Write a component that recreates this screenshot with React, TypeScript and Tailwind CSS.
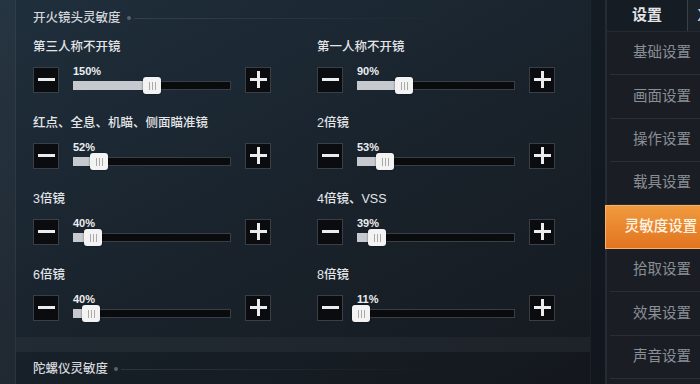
import React from 'react';

type Sens = { label: string; value: number; pos: number };

// pos = thumb centre, px from the track's left edge
const FIRE_SCOPE: Sens[] = [
  { label: '第三人称不开镜', value: 150, pos: 79 },
  { label: '第一人称不开镜', value: 90, pos: 47 },
  { label: '红点、全息、机瞄、侧面瞄准镜', value: 52, pos: 26 },
  { label: '2倍镜', value: 53, pos: 28 },
  { label: '3倍镜', value: 40, pos: 20 },
  { label: '4倍镜、VSS', value: 39, pos: 20 },
  { label: '6倍镜', value: 40, pos: 18 },
  { label: '8倍镜', value: 11, pos: 4 },
];

const GYRO: Sens[] = [
  { label: '第三人称不开镜', value: 300, pos: 150 },
  { label: '第一人称不开镜', value: 300, pos: 150 },
];

const MENU = ['基础设置', '画面设置', '操作设置', '载具设置', '灵敏度设置', '拾取设置', '效果设置', '声音设置', '其他设置'];
const ACTIVE_MENU = '灵敏度设置';

const StepButton = ({ kind }: { kind: 'minus' | 'plus' }) => (
  <button className="flex h-[26px] w-[26px] shrink-0 items-center justify-center border border-[#3a3f46] bg-[#0a0c0f]">
    <svg width="17" height="17" viewBox="0 0 17 17" fill="#ececec">
      <rect x="0" y="7" width="17" height="3" />
      {kind === 'plus' && <rect x="7" y="0" width="3" height="17" />}
    </svg>
  </button>
);

const SensRow = ({ label, value, pos }: Sens) => (
  <div className="flex flex-col">
    <div className="h-4 whitespace-nowrap text-[12.5px] font-medium leading-4 text-[#e3e5e8]">{label}</div>
    <div className="mt-[10px] flex items-center justify-between">
      <StepButton kind="minus" />
      <div className="flex w-[158px] flex-col">
        <span className="h-3 text-[11px] font-bold leading-3 text-[#eceef0]">{value}%</span>
        <div className="relative h-[17px]">
          <div className="absolute inset-x-0 top-[4px] h-[9px] border border-[#3a3f45] bg-[#090b0d]" />
          <div className="absolute left-0 top-[4px] h-[9px] bg-[#c6c9cd]" style={{ width: pos }} />
          <div
            className="absolute top-0 flex h-[17px] w-[18px] items-center justify-center gap-[2px] rounded-[3px] bg-[#f3f3f3] shadow-[0_0_2px_rgba(0,0,0,0.6)]"
            style={{ left: pos - 9 }}
          >
            <span className="h-[8px] w-px bg-[#a9a9a9]" />
            <span className="h-[8px] w-px bg-[#a9a9a9]" />
            <span className="h-[8px] w-px bg-[#a9a9a9]" />
          </div>
        </div>
      </div>
      <StepButton kind="plus" />
    </div>
  </div>
);

const SectionTitle = ({ title }: { title: string }) => (
  <div className="flex h-4 items-center">
    <span className="text-[12.5px] font-medium leading-4 text-[#d3d6da]">{title}</span>
    <span className="ml-[6px] h-[4px] w-[4px] rounded-full bg-[#5b6169]" />
    <span className="ml-[3px] h-px w-[320px] bg-linear-to-r from-white/10 to-transparent" />
  </div>
);

export default function App() {
  return (
    <div
      className="relative h-[384px] w-[700px] overflow-hidden bg-linear-to-br from-[#1f2f3c] via-[#19222b] to-[#15181d] select-none"
      style={{ fontFamily: '"Liberation Sans", "Noto Sans CJK SC", sans-serif' }}
    >
      <div className="flex h-full w-[717px]">
        {/* left edge strip */}
        <div className="w-4 shrink-0 border-r border-white/5 bg-white/[0.03]" />

        {/* sensitivity list */}
        <main className="flex w-[574px] shrink-0 flex-col overflow-hidden">
          <section className="shrink-0 pb-[15px] pl-[17px] pt-[10px]">
            <SectionTitle title="开火镜头灵敏度" />
            <div className="mt-[13px] grid grid-cols-[238px_238px] gap-x-[46px] gap-y-[21px]">
              {FIRE_SCOPE.map(s => (
                <SensRow key={s.label + s.value} {...s} />
              ))}
            </div>
          </section>

          <div className="h-[15px] shrink-0 bg-white/[0.035]" />

          <section className="shrink-0 bg-black/[0.06] pl-[17px] pt-[9px]">
            <SectionTitle title="陀螺仪灵敏度" />
            <div className="mt-[13px] grid grid-cols-[238px_238px] gap-x-[46px] gap-y-[21px]">
              {GYRO.map(s => (
                <SensRow key={s.label} {...s} />
              ))}
            </div>
          </section>
        </main>

        {/* gutter */}
        <div className="w-[15px] shrink-0 border-l border-white/[0.04] bg-[#0e141a]/50" />

        {/* settings sidebar */}
        <aside className="flex w-[112px] shrink-0 flex-col border-l-2 border-[#262c34] bg-[#1a1e24]">
          <div className="flex h-[32px] shrink-0 border-b border-[#252a31] bg-[#161c23]">
            <div className="flex w-[80px] items-center justify-center text-[15px] font-bold text-[#e2e4e6]">设置</div>
            <div className="flex w-[30px] items-center justify-center border-l border-[#3a4048] bg-[#1b2129] text-[16px] text-[#d6d8da]">
              X
            </div>
          </div>
          {MENU.map(item =>
            item === ACTIVE_MENU ? (
              <div
                key={item}
                className="-ml-[2px] flex h-[44px] shrink-0 items-center justify-center border border-[#f6b26a] bg-linear-to-b from-[#f09a3e] to-[#e2741f] text-[14.5px] font-medium text-[#fff3e4]"
              >
                {item}
              </div>
            ) : (
              <div
                key={item}
                className="ml-[3px] flex h-[43.3px] shrink-0 items-center justify-center border-b border-[#2a2f36] pr-[3px] text-[14.5px] text-[#8a8f96]"
              >
                {item}
              </div>
            )
          )}
        </aside>
      </div>
    </div>
  );
}
